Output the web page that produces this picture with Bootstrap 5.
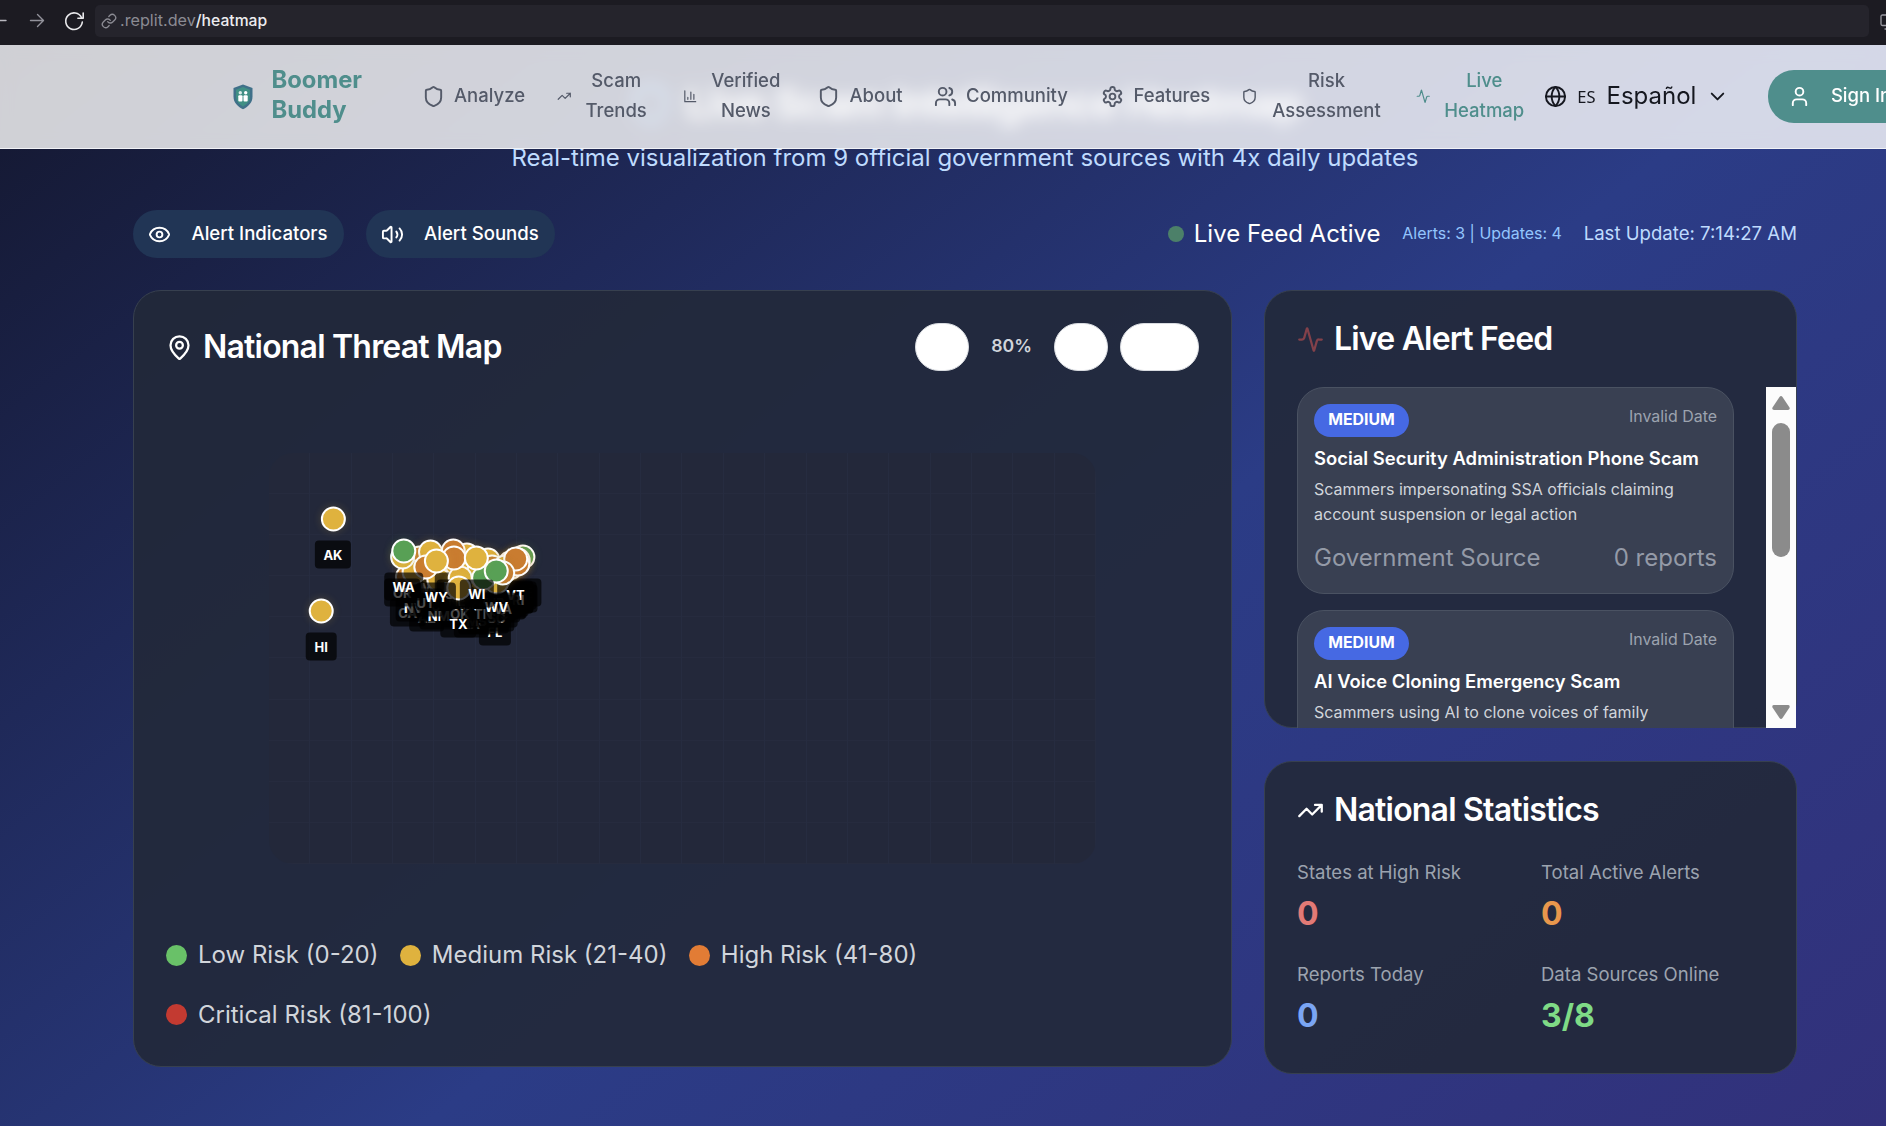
<!DOCTYPE html>
<html lang="en">
<head>
<meta charset="utf-8">
<meta name="viewport" content="width=device-width, initial-scale=1">
<title>Boomer Buddy - Live Heatmap</title>
<link href="https://cdn.jsdelivr.net/npm/bootstrap@5.3.0/dist/css/bootstrap.min.css" rel="stylesheet">
<style>
  html, body { height: 100%; overflow: hidden; }
  body { font-family: Inter, "Liberation Sans", sans-serif; font-size: 24px; line-height: 1.6; color: #fff; }
  .app-shell { height: 1126px; background: linear-gradient(142deg, #13162c 0%, #2b3c86 56%, #32317b 100%); }
  .ico { fill: none; stroke: currentColor; stroke-width: 2; stroke-linecap: round; stroke-linejoin: round; flex: none; width: 23px; height: 23px; }
  .ico-sm { width: 14.5px; height: 14.5px; }
  .ico-lg { width: 27px; height: 27px; }

  /* browser bar */
  .chrome-bar { height: 45px; background: #1c1b22; padding-bottom: 4px; }
  .chrome-field { width: 1774px; height: 32px; border-radius: 5px; background: #25242c; font-size: 16.2px; color: #8b8b93; margin-left: 9px; padding-left: 6px; }
  .chrome-field b { font-weight: 500; font-size: 15.7px; color: #ececef; }

  /* page and sticky header */
  .page-view { height: 1081px; }
  .site-nav { top: 0; left: 0; right: 0; height: 104px; z-index: 10; padding: 0 0 0 231.5px; background: rgba(255,255,255,.8); backdrop-filter: blur(8px); border-bottom: 1px solid #f1f2f6; overflow: hidden; }
  .brand-name { font-weight: 700; font-size: 23.8px; line-height: 30px; color: #4f8e8c; width: 150px; margin-left: 18px; flex: none; padding-bottom: 3px; }
  .nav-entry { font-size: 18.5px; font-weight: 500; line-height: 30px; color: #545a69; gap: 9.5px; margin-left: 31px; text-align: center; white-space: nowrap; flex: none; }
  .nav-entry span { padding-bottom: 3px; }
  .nav-entry.two-line { gap: 14px; margin-left: 32px; }
  .nav-entry.on { color: #4f8e8c; }
  .lang { color: #15171f; margin-left: 20px; flex: none; }
  .lang small { font-size: 16.5px; font-family: "Noto Sans", sans-serif; margin: 2px 11px 0 10px; }
  .signin { width: 180px; height: 53px; border-radius: 26px; background: #4f8e8c; color: #fff; font-size: 18.5px; font-weight: 500; margin-left: 38.5px; padding-left: 20px; gap: 20px; }
  .signin span { padding-bottom: 2px; }

  .wrap { width: 1664px; margin-left: 133px; padding-top: 28px; }
  .hero-title { font-size: 41.5px; line-height: 60px; font-weight: 700; letter-spacing: -.025em; gap: 12px; margin: 0; }
  .hero-sub { color: #bfdbfe; margin-top: 5px; margin-bottom: 33px; line-height: 39px; }

  .pill-btn { height: 48px; border-radius: 24px; background: #213555; color: #fff; font-size: 18.6px; font-weight: 500; padding: 0 16px 0 15px; gap: 20.5px; line-height: 1; }
  .pill-btn span { padding-bottom: 2px; }
  .status-dot { width: 16px; height: 16px; border-radius: 50%; background: #4c8069; }
  .t-alerts { font-size: 15.95px; color: #93c5fd; }
  .t-last { font-size: 18.6px; color: #bfdbfe; }

  .panel { background: rgba(34,41,57,.91); border: 1px solid #37404f; border-radius: 28px; }
  .panel-title { font-size: 32px; font-weight: 600; letter-spacing: -.025em; line-height: 40px; margin: 0; gap: 10px; }
  .map-panel { width: 1099px; height: 777px; padding: 32px; }
  .side-col { width: 533px; gap: 33px; }
  .zoom-btn { height: 48px; width: 54px; border-radius: 24px; background: #fff; border: 1px solid #d8dbe0; }
  .zoom-label { font-size: 17.7px; font-weight: 600; color: #d1d5db; line-height: 1; padding-bottom: 2px; }
  .map-canvas { width: 827px; height: 411px; margin: 82px auto 0; border-radius: 24px; background-color: #23283a;
    background-image: repeating-linear-gradient(90deg, transparent 0 40.35px, #262c40 40.35px 41.35px), repeating-linear-gradient(180deg, transparent 0 40.1px, #262b3e 40.1px 41.1px); }
  .pin { position: absolute; transform: translate(-50%, -12.5px); text-align: center; }
  .pin i { display: block; width: 25px; height: 25px; margin: 0 auto 9px; border-radius: 50%; border: 2px solid #fff; }
  .pin span { display: block; background: rgba(0,0,0,.7); border-radius: 4px; font-size: 13px; line-height: 20px; font-weight: 700; padding: 4px 8.6px; }
  .low { background: #58a055; box-shadow: 0 0 8px rgba(88,160,85,.2); }
  .med { background: #dfb23e; box-shadow: 0 0 8px rgba(223,178,62,.2); }
  .high { background: #c97c30; box-shadow: 0 0 8px rgba(201,124,48,.2); }
  .legend { margin-top: 72px; gap: 21.4px 21.4px; color: #d1d5db; }
  .legend div { gap: 11px; }
  .legend i { width: 21px; height: 21px; border-radius: 50%; }

  .feed-panel { height: 438px; padding: 28px 0 0 32px; }
  .feed-view { height: 341px; margin-top: 28px; overflow: hidden; }
  .feed-list { width: 437px; gap: 16px; }
  .alert-item { height: 207px; border: 1px solid #4a5262; border-radius: 27px; background: #394052; padding: 16px; flex: none; }
  .sev { height: 33px; width: 95px; border-radius: 17px; background: #4669e3; font-size: 15.8px; font-weight: 700; line-height: 31px; text-align: center; }
  .when { font-size: 15.95px; line-height: 25.6px; color: #9ca3af; }
  .alert-name { font-size: 18.45px; font-weight: 600; line-height: 29.6px; margin: 7px 0 3px; white-space: nowrap; }
  .alert-text { font-size: 16px; line-height: 25.4px; color: #d1d5db; margin: 0; }
  .alert-foot { color: #949aa7; margin-top: 12px; line-height: 38px; }
  .bar-track { width: 30px; background: #fcfcfc; padding: 9px 0; color: #8b8b8b; }
  .bar-thumb { width: 18px; height: 134px; border-radius: 9px; background: #8b8b8b; margin: 13px 0 auto; }

  .stat-panel { height: 313px; padding: 28px 32px; }
  .stat-grid { display: grid; grid-template-columns: 244px 1fr; gap: 21px 0; margin-top: 27px; }
  .stat-cap { font-size: 18.55px; line-height: 30px; color: #9ca3af; }
  .stat-num { font-size: 32px; line-height: 49px; padding-top: 2px; font-weight: 700; }
</style>
</head>
<body>
<svg class="d-none">
  <symbol id="shield" viewBox="0 0 24 24"><path d="M20 13c0 5-3.5 7.500-7.660 8.950a1 1 0 0 1-.67-.01C7.500 20.500 4 18 4 13V6a1 1 0 0 1 1-1c2 0 4.500-1.200 6.240-2.720a1.170 1.170 0 0 1 1.520 0C14.510 3.810 17 5 19 5a1 1 0 0 1 1 1z"/></symbol>
  <symbol id="trend" viewBox="0 0 24 24"><path d="M22 7l-8.500 8.500-5-5L2 17M16 7h6v6"/></symbol>
  <symbol id="bars" viewBox="0 0 24 24"><path d="M3 3v18h18M18 17V9M13 17V5M8 17v-3"/></symbol>
  <symbol id="users" viewBox="0 0 24 24"><path d="M16 21v-2a4 4 0 0 0-4-4H6a4 4 0 0 0-4 4v2M22 21v-2a4 4 0 0 0-3-3.870M16 3.130a4 4 0 0 1 0 7.750"/><circle cx="9" cy="7" r="4"/></symbol>
  <symbol id="gear" viewBox="0 0 24 24"><path d="M12.220 2h-.44a2 2 0 0 0-2 2v.18a2 2 0 0 1-1 1.730l-.43.25a2 2 0 0 1-2 0l-.15-.08a2 2 0 0 0-2.730.73l-.22.38a2 2 0 0 0 .73 2.730l.15.1a2 2 0 0 1 1 1.720v.51a2 2 0 0 1-1 1.740l-.15.09a2 2 0 0 0-.73 2.730l.22.38a2 2 0 0 0 2.730.73l.15-.08a2 2 0 0 1 2 0l.43.25a2 2 0 0 1 1 1.730V20a2 2 0 0 0 2 2h.44a2 2 0 0 0 2-2v-.18a2 2 0 0 1 1-1.730l.43-.25a2 2 0 0 1 2 0l.15.08a2 2 0 0 0 2.730-.73l.22-.39a2 2 0 0 0-.73-2.730l-.15-.08a2 2 0 0 1-1-1.740v-.5a2 2 0 0 1 1-1.740l.15-.09a2 2 0 0 0 .73-2.730l-.22-.38a2 2 0 0 0-2.730-.73l-.15.08a2 2 0 0 1-2 0l-.43-.25a2 2 0 0 1-1-1.730V4a2 2 0 0 0-2-2z"/><circle cx="12" cy="12" r="3"/></symbol>
  <symbol id="pulse" viewBox="0 0 24 24"><path d="M22 12h-2.480a2 2 0 0 0-1.930 1.460l-2.350 8.360a.25.25 0 0 1-.48 0L9.240 2.180a.25.25 0 0 0-.48 0l-2.350 8.360A2 2 0 0 1 4.490 12H2"/></symbol>
  <symbol id="globe" viewBox="0 0 24 24"><circle cx="12" cy="12" r="10"/><path d="M12 2a14.500 14.500 0 0 0 0 20 14.500 14.500 0 0 0 0-20M2 12h20"/></symbol>
  <symbol id="chev" viewBox="0 0 24 24"><path d="M6 9l6 6 6-6"/></symbol>
  <symbol id="person" viewBox="0 0 24 24"><path d="M19 21v-2a4 4 0 0 0-4-4H9a4 4 0 0 0-4 4v2"/><circle cx="12" cy="7" r="4"/></symbol>
  <symbol id="eye" viewBox="0 0 24 24"><path d="M2.062 12.348a1 1 0 0 1 0-.696 10.750 10.750 0 0 1 19.876 0 1 1 0 0 1 0 .696 10.750 10.750 0 0 1-19.876 0"/><circle cx="12" cy="12" r="3"/></symbol>
  <symbol id="sound" viewBox="0 0 24 24"><path d="M11 4.702a.705.705 0 0 0-1.203-.498L6.413 7.587A1.400 1.400 0 0 1 5.416 8H3a1 1 0 0 0-1 1v6a1 1 0 0 0 1 1h2.416a1.400 1.400 0 0 1 .997.413l3.383 3.384A.705.705 0 0 0 11 19.298zM16 9a5 5 0 0 1 0 6M19.364 18.364a9 9 0 0 0 0-12.728"/></symbol>
  <symbol id="marker" viewBox="0 0 24 24"><path d="M20 10c0 4.993-5.539 10.193-7.399 11.799a1 1 0 0 1-1.202 0C9.539 20.193 4 14.993 4 10a8 8 0 0 1 16 0"/><circle cx="12" cy="10" r="3"/></symbol>
</svg>

<div class="app-shell overflow-hidden">
  <div class="chrome-bar d-flex align-items-center overflow-hidden">
    <svg class="ico" style="width:86px;height:41px" viewBox="0 0 86 41"><g stroke="#b9b9c0" stroke-width="1.400"><path d="M-4 20.500H6M-8 20.500l6-6"/></g><g stroke="#92929b" stroke-width="1.400"><path d="M30.500 20.500H43M37.500 14.500l6 6-6 6"/></g><g stroke="#e9e9ec" stroke-width="1.600"><path d="M81.500 17.500A8.300 8.300 0 1 0 82.300 22M83.200 13v5.300h-5.300"/></g></svg>
    <div class="chrome-field d-flex align-items-center">
      <svg class="ico" style="width:16px;height:16px;margin-right:3px" viewBox="0 0 24 24"><path d="M10 13a5 5 0 0 0 7.540.54l3-3a5 5 0 0 0-7.070-7.070l-1.720 1.710M14 11a5 5 0 0 0-7.540-.54l-3 3a5 5 0 0 0 7.070 7.070l1.710-1.710"/></svg>
      <span>.replit.dev<b>/heatmap</b></span>
    </div>
    <svg class="ico ms-auto" style="width:6px;height:18px" viewBox="0 0 6 18"><path stroke="#9a9aa2" stroke-width="1.300" d="M8 3H2.500Q1 3 1 4.500V12Q1 13.500 2.500 13.500H8M5 17h3"/></svg>
  </div>

  <div class="page-view position-relative">
    <nav class="site-nav position-absolute d-flex align-items-center">
      <svg width="22" height="26" viewBox="0 0 22 26" style="flex:none"><path fill="#3f7089" d="M11 .5l9.500 3.500v8.500c0 6-4 10-9.500 12.800C5.500 22.500 1.500 18.500 1.500 12.500V4z"/><path fill="#3f8f84" d="M11 3l7 2.700v6.800c0 4.500-2.800 7.600-7 10-4.200-2.400-7-5.500-7-10V5.700z"/><g fill="#fff"><circle cx="8.300" cy="8.800" r="1.700" opacity=".8"/><circle cx="13.700" cy="8.800" r="1.700"/><rect x="6.300" y="11.200" width="4.200" height="6.200" rx="1"/><rect x="11.500" y="11.200" width="4.200" height="6.200" rx="1"/></g></svg>
      <div class="brand-name">Boomer<br>Buddy</div>
      <div class="nav-entry d-flex align-items-center ms-0"><svg class="ico"><use href="#shield"/></svg><span>Analyze</span></div>
      <div class="nav-entry two-line d-flex align-items-center"><svg class="ico ico-sm"><use href="#trend"/></svg><span>Scam<br>Trends</span></div>
      <div class="nav-entry two-line d-flex align-items-center" style="margin-left:36px"><svg class="ico ico-sm"><use href="#bars"/></svg><span>Verified<br>News</span></div>
      <div class="nav-entry d-flex align-items-center" style="margin-left:36.5px"><svg class="ico"><use href="#shield"/></svg><span>About</span></div>
      <div class="nav-entry d-flex align-items-center"><svg class="ico"><use href="#users"/></svg><span>Community</span></div>
      <div class="nav-entry d-flex align-items-center" style="margin-left:33px"><svg class="ico"><use href="#gear"/></svg><span>Features</span></div>
      <div class="nav-entry two-line d-flex align-items-center" style="margin-left:31px"><svg class="ico" style="width:17px;height:17px"><use href="#shield"/></svg><span>Risk<br>Assessment</span></div>
      <div class="nav-entry two-line on d-flex align-items-center" style="margin-left:35px"><svg class="ico ico-sm"><use href="#pulse"/></svg><span>Live<br>Heatmap</span></div>
      <div class="lang d-flex align-items-center"><svg class="ico"><use href="#globe"/></svg><small>ES</small><span>Español</span><svg class="ico" style="margin-left:10px"><use href="#chev"/></svg></div>
      <div class="signin d-flex align-items-center flex-shrink-0"><svg class="ico"><use href="#person"/></svg><span class="text-nowrap">Sign In</span></div>
    </nav>

    <main class="wrap">
      <h1 class="hero-title d-flex align-items-center justify-content-center"><svg class="ico" style="width:45px;height:45px;color:#60a5fa"><use href="#shield"/></svg>Live Scam Intelligence Heatmap</h1>
      <p class="hero-sub text-center">Real-time visualization from 9 official government sources with 4x daily updates</p>

      <div class="d-flex align-items-center">
        <div class="pill-btn d-flex align-items-center"><svg class="ico"><use href="#eye"/></svg><span>Alert Indicators</span></div>
        <div class="pill-btn d-flex align-items-center" style="margin-left:22px"><svg class="ico"><use href="#sound"/></svg><span>Alert Sounds</span></div>
        <div class="d-flex align-items-center ms-auto" style="gap:21.8px">
          <div class="d-flex align-items-center" style="gap:10px"><span class="status-dot"></span><span>Live Feed Active</span></div>
          <span class="t-alerts">Alerts: 3 | Updates: 4</span>
          <span class="t-last">Last Update: 7:14:27 AM</span>
        </div>
      </div>

      <div class="d-flex justify-content-between align-items-start" style="margin-top:32px">
        <section class="panel map-panel">
          <div class="d-flex align-items-center">
            <h2 class="panel-title d-flex align-items-center"><svg class="ico ico-lg"><use href="#marker"/></svg>National Threat Map</h2>
            <div class="d-flex align-items-center ms-auto">
              <span class="zoom-btn"></span><span class="zoom-label" style="margin:0 22px">80%</span>
              <span class="zoom-btn"></span><span class="zoom-btn" style="width:79px;margin-left:12px"></span>
            </div>
          </div>
          <div class="map-canvas position-relative" id="map"></div>
          <div class="legend d-flex flex-wrap">
            <div class="d-flex align-items-center"><i style="background:#69c168"></i>Low Risk (0-20)</div>
            <div class="d-flex align-items-center"><i style="background:#dfb23e"></i>Medium Risk (21-40)</div>
            <div class="d-flex align-items-center"><i style="background:#e27c35"></i>High Risk (41-80)</div>
            <div class="w-100 d-flex align-items-center"><i style="background:#c33a31"></i>Critical Risk (81-100)</div>
          </div>
        </section>

        <div class="side-col d-flex flex-column">
          <section class="panel feed-panel">
            <h2 class="panel-title d-flex align-items-center"><svg class="ico ico-lg" style="color:#83414a"><use href="#pulse"/></svg>Live Alert Feed</h2>
            <div class="feed-view d-flex justify-content-between">
              <div class="feed-list d-flex flex-column">
                <article class="alert-item">
                  <div class="d-flex justify-content-between align-items-start"><span class="sev">MEDIUM</span><span class="when">Invalid Date</span></div>
                  <h3 class="alert-name">Social Security Administration Phone Scam</h3>
                  <p class="alert-text">Scammers impersonating SSA officials claiming account suspension or legal action</p>
                  <div class="alert-foot d-flex justify-content-between"><span>Government Source</span><span>0 reports</span></div>
                </article>
                <article class="alert-item">
                  <div class="d-flex justify-content-between align-items-start"><span class="sev">MEDIUM</span><span class="when">Invalid Date</span></div>
                  <h3 class="alert-name">AI Voice Cloning Emergency Scam</h3>
                  <p class="alert-text">Scammers using AI to clone voices of family</p>
                </article>
              </div>
              <div class="bar-track d-flex flex-column align-items-center">
                <svg width="18" height="14" viewBox="0 0 18 14" fill="currentColor"><path d="M7.500 1Q9-.8 10.500 1L17.500 11.500Q18.300 14 16 14H2Q-.3 14 .5 11.500z"/></svg>
                <div class="bar-thumb"></div>
                <svg width="18" height="14" viewBox="0 0 18 14" fill="currentColor"><path d="M7.500 13Q9 14.800 10.500 13L17.500 2.500Q18.300 0 16 0H2Q-.3 0 .5 2.500z"/></svg>
              </div>
            </div>
          </section>

          <section class="panel stat-panel">
            <h2 class="panel-title d-flex align-items-center"><svg class="ico ico-lg"><use href="#trend"/></svg>National Statistics</h2>
            <div class="stat-grid">
              <div><div class="stat-cap">States at High Risk</div><div class="stat-num" style="color:#e27a76">0</div></div>
              <div><div class="stat-cap">Total Active Alerts</div><div class="stat-num" style="color:#e8974c">0</div></div>
              <div><div class="stat-cap">Reports Today</div><div class="stat-num" style="color:#7aa5f3">0</div></div>
              <div><div class="stat-cap">Data Sources Online</div><div class="stat-num" style="color:#7fdb86">3/8</div></div>
            </div>
          </section>
        </div>
      </div>
    </main>
  </div>
</div>

<script src="https://cdn.jsdelivr.net/npm/bootstrap@5.3.0/dist/js/bootstrap.bundle.min.js"></script>
<script>
  // code, latitude, longitude, risk level; drawn in name order so later states overlap earlier ones
  const states = [
    ['AL',32.8,-86.8,'med'],['AK',61.4,-152.4,'med'],['AZ',33.7,-111.4,'med'],['AR',35,-92.4,'med'],['CA',36.1,-119.7,'high'],
    ['CO',39.1,-105.3,'med'],['CT',41.6,-72.8,'med'],['DE',39.3,-75.5,'med'],['FL',27.8,-81.7,'med'],['GA',33,-83.6,'med'],
    ['HI',21.1,-157.5,'med'],['ID',44.2,-114.5,'high'],['IL',40.3,-89,'high'],['IN',39.8,-86.3,'med'],['IA',42,-93.2,'med'],
    ['KS',38.5,-96.7,'med'],['KY',37.7,-84.7,'med'],['LA',31.2,-91.9,'med'],['ME',44.7,-69.4,'low'],['MD',39.1,-76.8,'med'],
    ['MA',42.2,-71.5,'high'],['MI',43.3,-84.5,'med'],['MN',45.7,-93.9,'med'],['MS',32.7,-89.7,'med'],['MO',38.5,-92.3,'med'],
    ['MT',46.9,-109.6,'med'],['NE',41.1,-98.3,'med'],['NV',38.3,-117.1,'med'],['NH',43.5,-71.6,'med'],['NJ',40.3,-74.5,'high'],
    ['NM',34.8,-106.2,'med'],['NY',42.2,-74.9,'med'],['NC',35.6,-79.8,'med'],['ND',47.5,-99.8,'high'],['OH',40.4,-82.8,'high'],
    ['OK',35.6,-96.9,'med'],['OR',44.6,-122.1,'med'],['PA',40.6,-77.2,'med'],['RI',41.7,-71.5,'high'],['SC',33.9,-80.9,'med'],
    ['SD',44.3,-99.4,'high'],['TN',35.7,-86.7,'low'],['TX',31.1,-97.6,'med'],['UT',40.2,-111.9,'high'],['VT',44,-72.7,'high'],
    ['VA',37.8,-78.2,'high'],['WA',47.4,-121.5,'low'],['WV',38.5,-81,'low'],['WI',44.3,-89.6,'med'],['WY',42.8,-107.3,'med']];
  const map = document.getElementById('map');
  for (const [code, lat, lon, risk] of states) {
    const pin = document.createElement('div');
    pin.className = 'pin';
    pin.style.left = (134.7 + 2.29 * (lon + 121.5)) + 'px';
    pin.style.top = (98 + 2.28 * (47.4 - lat)) + 'px';
    pin.innerHTML = '<i class="' + risk + '"></i><span>' + code + '</span>';
    map.append(pin);
  }
</script>
</body>
</html>
